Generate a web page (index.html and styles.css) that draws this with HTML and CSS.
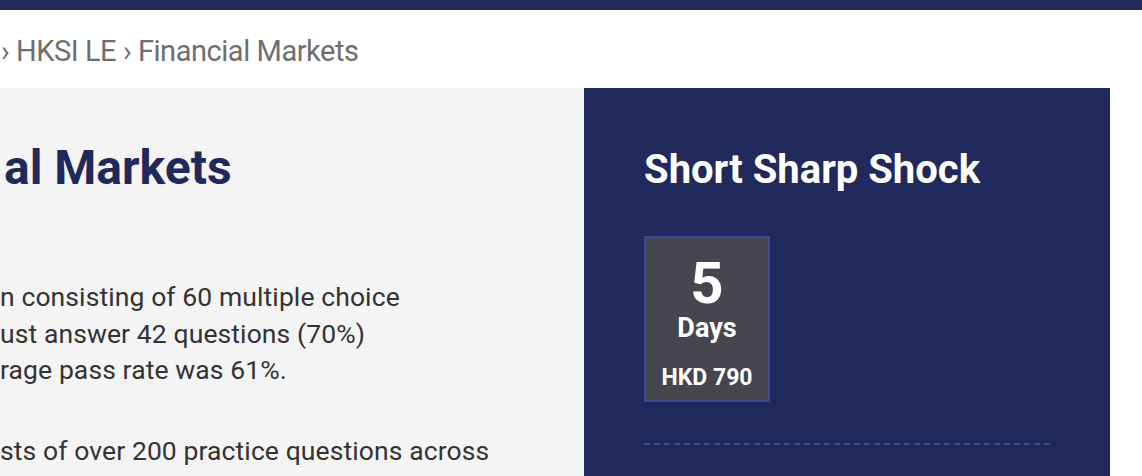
FILE: index.html
```html
<!DOCTYPE html>
<html lang="en">
<head>
<meta charset="utf-8">
<title>HKSI LE › Financial Markets</title>
<link rel="stylesheet" href="styles.css">
</head>
<body>
<div class="topbar"></div>
<div class="frame">
  <nav class="crumbs">› HKSI LE › Financial Markets</nav>
  <div class="main">
    <section class="content">
      <h1 class="title">al Markets</h1>
      <p class="copy">
        <span class="line">n consisting of 60 multiple choice</span>
        <span class="line">ust answer 42 questions (70%)</span>
        <span class="line">rage pass rate was 61%.</span>
      </p>
      <p class="copy">
        <span class="line">sts of over 200 practice questions across</span>
      </p>
    </section>
    <aside class="side">
      <h2 class="side-title">Short Sharp Shock</h2>
      <div class="course-box">
        <div class="days-num">5</div>
        <div class="days-label">Days</div>
        <div class="price">HKD 790</div>
      </div>
      <div class="divider"></div>
    </aside>
  </div>
</div>
</body>
</html>
```

FILE: styles.css
```css
html, body {
  margin: 0;
  padding: 0;
  overflow: hidden;
  background: #ffffff;
}
body {
  font-family: Roboto, "Liberation Sans", sans-serif;
}
.topbar {
  height: 10px;
  background: #1f295c;
}
.frame {
  width: 1110px;
}
.crumbs {
  height: 78px;
  box-sizing: border-box;
  padding: 24px 0 0 1px;
  font-size: 29px;
  line-height: 34px;
  letter-spacing: -0.45px;
  color: #6e6e6e;
  white-space: nowrap;
}
.main {
  display: flex;
  height: 400px;
}
.content {
  flex: 1;
  background: #f4f4f4;
  padding: 0;
  min-width: 0;
}
.title {
  margin: 55px 0 0;
  padding-left: 4px;
  font-size: 48px;
  line-height: 50px;
  font-weight: 700;
  color: #1f295c;
  white-space: nowrap;
}
.copy {
  margin: 86px 0 0;
  font-size: 26.5px;
  line-height: 36.5px;
  letter-spacing: 0.1px;
  color: #333333;
}
.copy + .copy {
  margin-top: 44px;
}
.line {
  display: block;
  white-space: nowrap;
}
.side {
  width: 526px;
  box-sizing: border-box;
  background: #1f295c;
  padding: 57px 60px 0;
  color: #ffffff;
}
.side-title {
  margin: 0;
  font-size: 40px;
  line-height: 50px;
  font-weight: 700;
  white-space: nowrap;
}
.course-box {
  margin-top: 41px;
  width: 126px;
  height: 166px;
  box-sizing: border-box;
  border: 2px solid #3a4993;
  background: #45464e;
  padding-top: 16px;
  display: flex;
  flex-direction: column;
  align-items: center;
  font-weight: 700;
}
.days-num {
  font-size: 58px;
  line-height: 58px;
}
.days-label {
  margin-top: 3px;
  font-size: 27px;
  line-height: 27px;
}
.price {
  margin-top: 24px;
  font-size: 23px;
  line-height: 23px;
}
.divider {
  margin-top: 41px;
  height: 2px;
  background: repeating-linear-gradient(90deg, #3c4a90 0 6px, transparent 6px 10px);
}
```
